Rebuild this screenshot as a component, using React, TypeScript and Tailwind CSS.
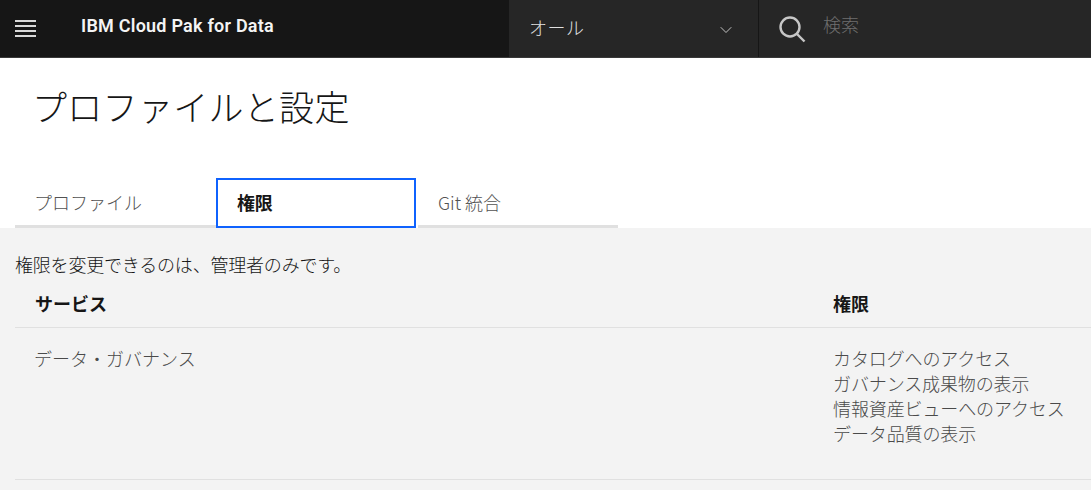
import { ChevronDown } from 'lucide-react';

const cjk = 'font-["Noto_Sans_CJK_JP","Noto_Sans",sans-serif]';

const tabs = ['プロファイル', '権限', 'Git 統合'];
const grants = ['カタログへのアクセス', 'ガバナンス成果物の表示', '情報資産ビューへのアクセス', 'データ品質の表示'];

function Header() {
  return (
    <header className="flex h-[58px] border-b border-[#393939] bg-[#161616]">
      <div className="flex w-[509px] items-center">
        <button className="ml-[15px] flex w-[21px] flex-col gap-[3px] pb-[1px]" aria-label="menu">
          <span className="h-[2px] bg-[#d8d8d8]" />
          <span className="h-[2px] bg-[#d8d8d8]" />
          <span className="h-[2px] bg-[#d8d8d8]" />
          <span className="h-[2px] bg-[#d8d8d8]" />
        </button>
        <span className='ml-[45px] pb-[6px] font-["Roboto",sans-serif] text-[18px] font-semibold tracking-[0.23px] text-[#f4f4f4]'>
          IBM Cloud Pak for Data
        </span>
      </div>
      <div className="flex w-[249px] items-center justify-between bg-[#262626] pl-[20px] pr-[22px]">
        <span className="pb-[3px] text-[18px] font-light tracking-[0.5px] text-[#e0e0e0]">オール</span>
        <ChevronDown size={20} strokeWidth={1.1} className="mt-[3px] text-[#d0d0d0]" />
      </div>
      <div className="flex flex-1 items-center border-l border-[#161616] bg-[#262626] pl-[20px]">
        <svg width="27" height="27" viewBox="0 0 27 27" fill="none" stroke="#c6c6c6" strokeWidth="2.4" className="mt-[1px]">
          <circle cx="11" cy="11" r="9.5" />
          <path d="M17.5 17.5 25.5 25.5" />
        </svg>
        <span className="ml-[17px] pb-[8px] text-[18px] font-light text-[#6f6f6f]">検索</span>
      </div>
    </header>
  );
}

function Tabs() {
  return (
    <div className="flex px-[15px]">
      {tabs.map((tab, i) =>
        i === 1 ? (
          <div key={tab} className="flex h-[50px] w-[200px] items-center border-[2px] border-[#0f62fe] pb-[1px] pl-[19px] text-[18px] font-bold tracking-[-0.2px] text-[#161616]">
            {tab}
          </div>
        ) : (
          <div key={tab} className={`flex h-[50px] items-center border-b-[3px] border-[#e0e0e0] pt-[2px] text-[18px] font-light text-[#525252] ${i === 0 ? 'w-[201px] pl-[19px]' : 'ml-[2px] w-[200px] pl-[20px]'}`}>
            {tab}
          </div>
        )
      )}
    </div>
  );
}

function Permissions() {
  return (
    <section className="flex-1 bg-[#f3f3f3] pl-[15px] pt-[24px]">
      <p className="h-[24px] text-[18px] leading-[24px] font-light tracking-[-0.2px] text-[#161616]">権限を変更できるのは、管理者のみです。</p>
      <div className="flex h-[52px] items-center border-b border-[#e0e0e0] pt-[3px] text-[18px] font-bold text-[#161616]">
        <div className="w-[818px] pl-[20px]">サービス</div>
        <div>権限</div>
      </div>
      <div className="flex h-[152px] border-b border-[#e0e0e0] pt-[18px] text-[18px] font-light text-[#4a4a4a]">
        <div className="w-[818px] pl-[19px] leading-[24px]">データ・ガバナンス</div>
        <div className="leading-[25px] tracking-[-0.12px]">
          {grants.map((g) => (
            <div key={g} className="whitespace-nowrap">{g}</div>
          ))}
        </div>
      </div>
    </section>
  );
}

export default function App() {
  return (
    <div className={`flex h-[490px] w-[1091px] flex-col overflow-hidden bg-white ${cjk}`}>
      <Header />
      <h1 className="mt-[24px] h-[96px] pl-[32px] text-[35px] leading-[48px] font-light tracking-[0.3px] text-[#161616]">プロファイルと設定</h1>
      <Tabs />
      <Permissions />
    </div>
  );
}
